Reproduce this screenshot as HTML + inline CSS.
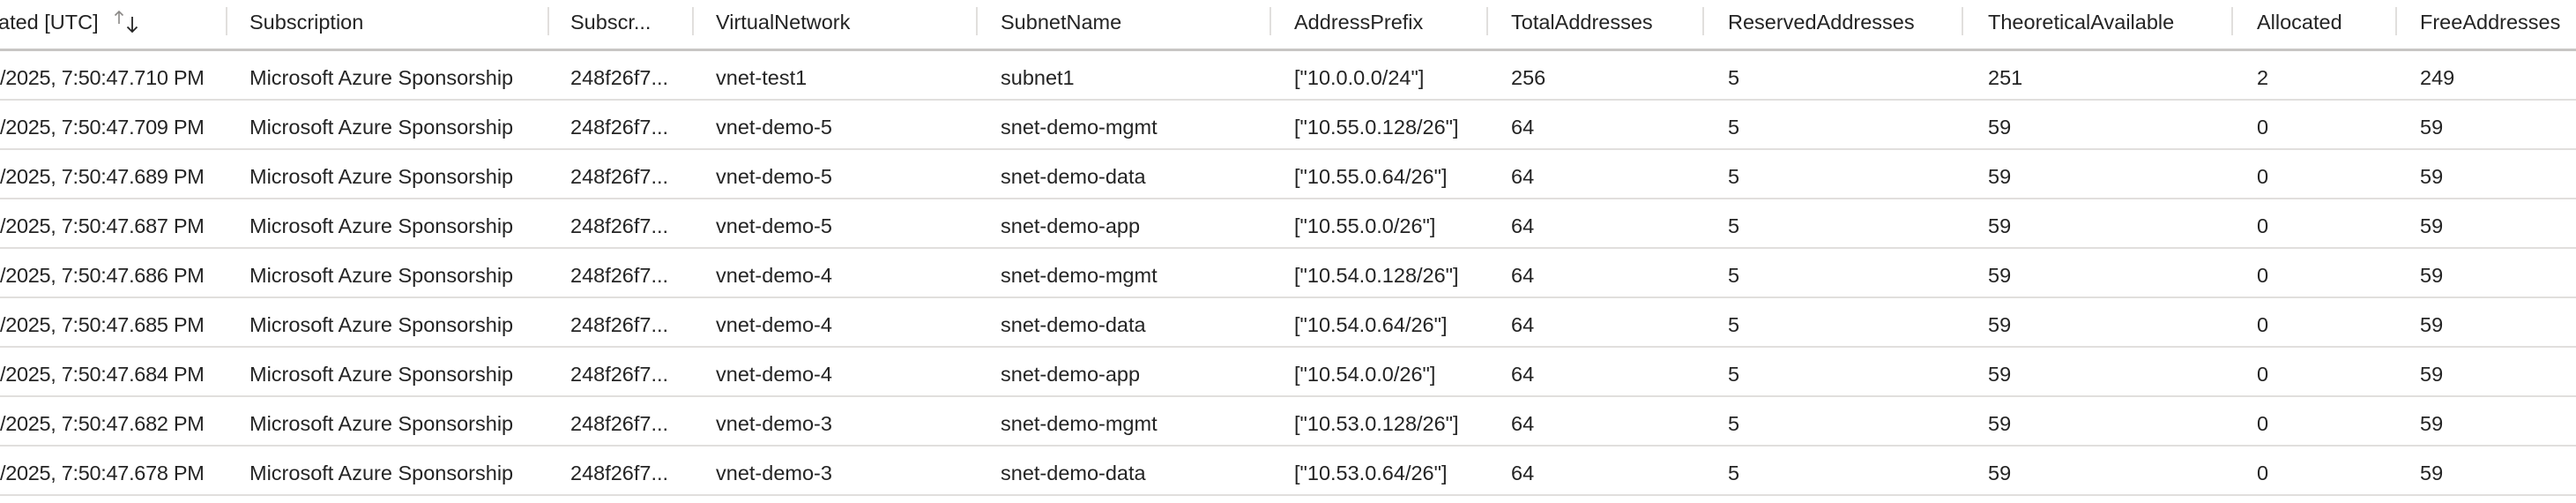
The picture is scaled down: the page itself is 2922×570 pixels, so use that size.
<!DOCTYPE html>
<html><head><meta charset="utf-8"><style>
html,body{margin:0;padding:0;background:#fff;width:2922px;height:570px;overflow:hidden;}
body{position:relative;font-family:"Liberation Sans",sans-serif;font-size:23.5px;color:#242424;}
.t{position:absolute;white-space:nowrap;line-height:30px;}
.sep{position:absolute;top:8px;width:2px;height:32px;background:#e1dfdd;}
.hl{position:absolute;left:0;width:2922px;height:3px;background:#c8c6c4;top:55px;}
.rl{position:absolute;left:0;width:2922px;height:2px;background:#e1dfdd;}
</style></head><body>
<div class="hl"></div>
<div id="c"></div>
<svg style="position:absolute;left:126px;top:10px" width="36" height="30" viewBox="0 0 36 30">
<path d="M9 3 V17 M4.5 7.5 L9 3 L13.5 7.5" stroke="#8a8886" stroke-width="1.6" fill="none"/>
<path d="M24 9 V26 M18.5 20.5 L24 26 L29.5 20.5" stroke="#242424" stroke-width="1.8" fill="none"/>
</svg>
<script>
var cols=[0,283,647,812,1135,1468,1714,1960,2255,2560,2745];
var seps=[256,621,785,1107,1440,1686,1931,2225,2531,2717];
var hdr=["ated [UTC]","Subscription","Subscr...","VirtualNetwork","SubnetName","AddressPrefix","TotalAddresses","ReservedAddresses","TheoreticalAvailable","Allocated","FreeAddresses"];
var rows=[
["/2025, 7:50:47.710 PM","vnet-test1","subnet1",'["10.0.0.0/24"]',"256","251","2","249"],
["/2025, 7:50:47.709 PM","vnet-demo-5","snet-demo-mgmt",'["10.55.0.128/26"]',"64","59","0","59"],
["/2025, 7:50:47.689 PM","vnet-demo-5","snet-demo-data",'["10.55.0.64/26"]',"64","59","0","59"],
["/2025, 7:50:47.687 PM","vnet-demo-5","snet-demo-app",'["10.55.0.0/26"]',"64","59","0","59"],
["/2025, 7:50:47.686 PM","vnet-demo-4","snet-demo-mgmt",'["10.54.0.128/26"]',"64","59","0","59"],
["/2025, 7:50:47.685 PM","vnet-demo-4","snet-demo-data",'["10.54.0.64/26"]',"64","59","0","59"],
["/2025, 7:50:47.684 PM","vnet-demo-4","snet-demo-app",'["10.54.0.0/26"]',"64","59","0","59"],
["/2025, 7:50:47.682 PM","vnet-demo-3","snet-demo-mgmt",'["10.53.0.128/26"]',"64","59","0","59"],
["/2025, 7:50:47.678 PM","vnet-demo-3","snet-demo-data",'["10.53.0.64/26"]',"64","59","0","59"]];
var h="";
for(var i=0;i<hdr.length;i++){h+='<div class="t" style="left:'+(i==0?-2:cols[i])+'px;top:10px">'+hdr[i]+'</div>';}
for(var i=0;i<seps.length;i++){h+='<div class="sep" style="left:'+seps[i]+'px"></div>';}
for(var r=0;r<rows.length;r++){
 var d=rows[r];var v=[d[0],"Microsoft Azure Sponsorship","248f26f7...",d[1],d[2],d[3],d[4],"5",d[5],d[6],d[7]];
 var y=73+56*r;
 for(var i=0;i<v.length;i++){h+='<div class="t" style="left:'+cols[i]+'px;top:'+y+'px'+(i==0?';letter-spacing:-0.3px':'')+'">'+v[i].replace(/"/g,'&quot;')+'</div>';}
 h+='<div class="rl" style="top:'+(112+56*r)+'px"></div>';
}
document.getElementById("c").innerHTML=h;
</script>
</body></html>
